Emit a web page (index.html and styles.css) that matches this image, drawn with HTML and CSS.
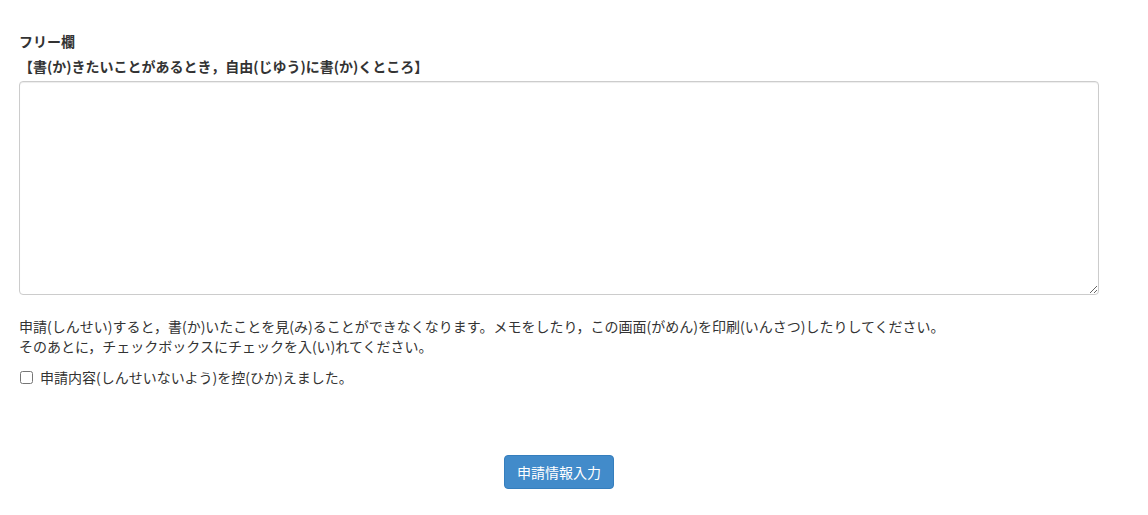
FILE: index.html
```html
<!DOCTYPE html>
<html lang="ja">
<head>
  <meta charset="UTF-8">
  <title>フリー欄</title>
  <link rel="stylesheet" href="styles.css">
</head>
<body>
<div class="container">
  <form class="form">
    <div class="form-group">
      <label class="label" for="free">フリー欄</label>
      <label class="label" for="free">【書(か)きたいことがあるとき，自由(じゆう)に書(か)くところ】</label>
      <textarea class="form-control" id="free"></textarea>
    </div>
    <p class="note">
      申請(しんせい)すると，書(か)いたことを見(み)ることができなくなります。メモをしたり，この画面(がめん)を印刷(いんさつ)したりしてください。<br>
      そのあとに，チェックボックスにチェックを入(い)れてください。
    </p>
    <div class="checkbox">
      <label><input type="checkbox"> 申請内容(しんせいないよう)を控(ひか)えました。</label>
    </div>
    <div class="actions">
      <button type="button" class="btn">申請情報入力</button>
    </div>
  </form>
</div>
</body>
</html>
```

FILE: styles.css
```css
* {
  box-sizing: border-box;
}
body {
  margin: 0;
  padding-top: 31px;
  font-family: "Noto Sans CJK JP", "Liberation Sans", sans-serif;
  font-size: 14px;
  line-height: 20px;
  color: #333;
  background: #fff;
}
.container {
  width: 1099px;
  padding-left: 19px;
}
.label {
  display: block;
  font-weight: bold;
  margin-bottom: 5px;
}
.form-control {
  display: block;
  width: 100%;
  height: 214px;
  margin: 0;
  padding: 6px 12px;
  border: 1px solid #ccc;
  border-radius: 4px;
  font: inherit;
  color: #555;
  box-shadow: inset 0 1px 1px rgba(0, 0, 0, .075);
  resize: both;
}
.note {
  margin: 21px 0 0;
}
.checkbox {
  margin-top: 11px;
}
.checkbox label {
  display: flex;
  align-items: center;
  gap: 7px;
}
.checkbox input {
  width: 13px;
  height: 13px;
  margin: 0 0 0 1px;
}
.actions {
  display: flex;
  justify-content: center;
  margin-top: 68px;
}
.btn {
  height: 34px;
  padding: 6px 12px;
  border: 1px solid #357ebd;
  border-radius: 4px;
  background-color: #428bca;
  color: #fff;
  font: inherit;
  cursor: pointer;
}
```
